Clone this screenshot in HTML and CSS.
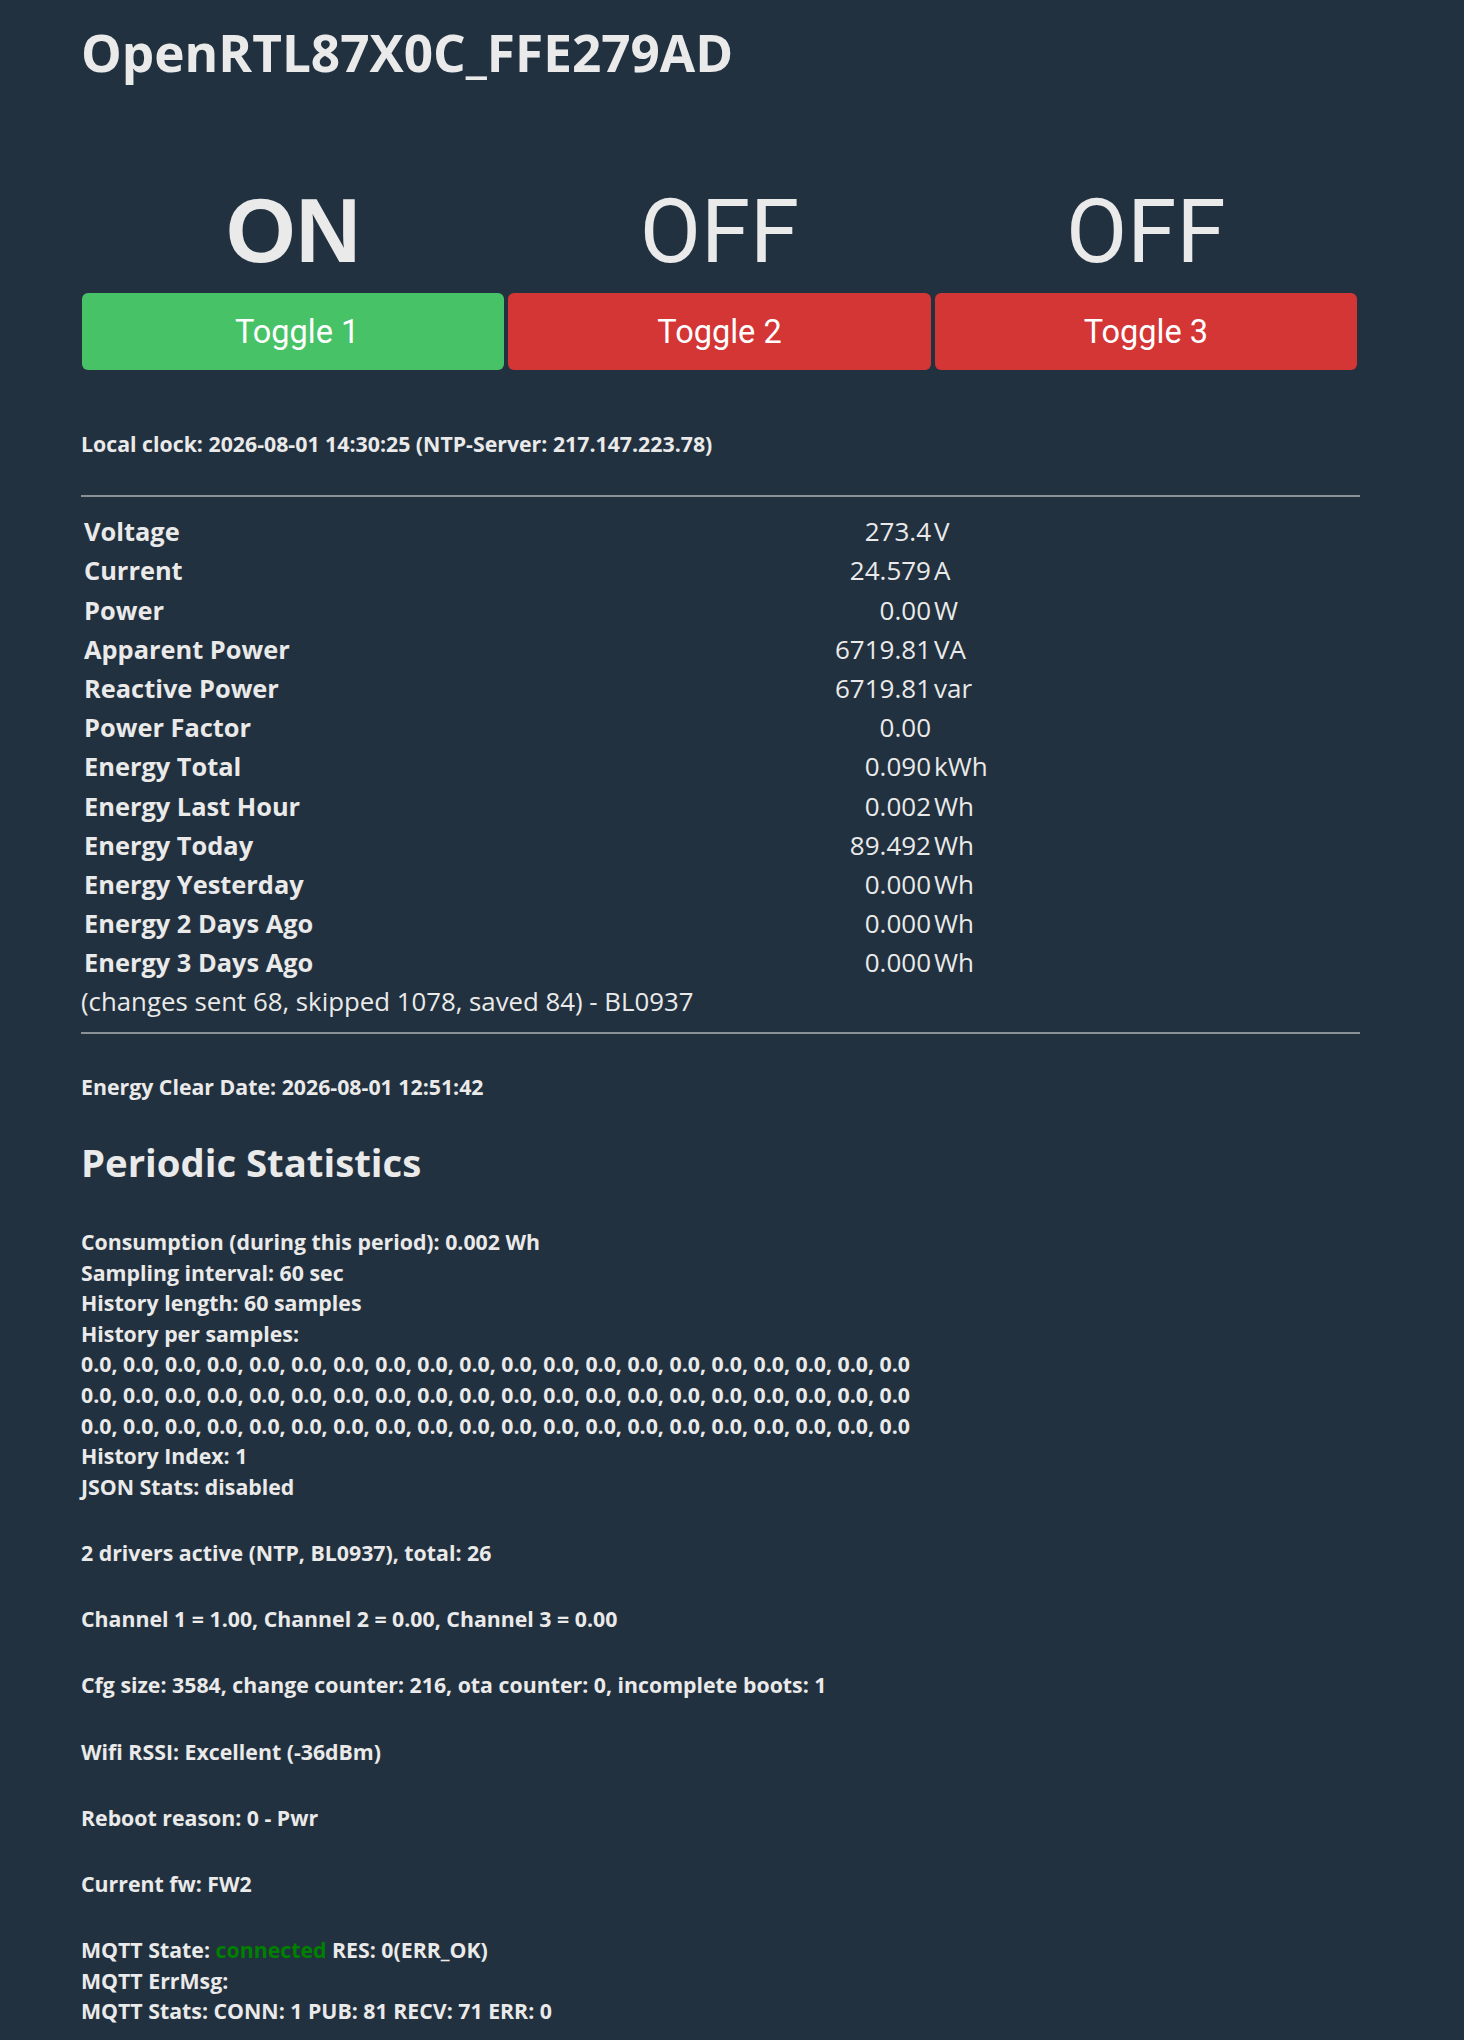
FILE: index.html
```html
<!DOCTYPE html>
<html lang="en">
<head>
    <meta charset="UTF-8">
    <meta name="viewport" content="width=device-width, initial-scale=1.0">
    <link rel="stylesheet" href="styles.css">
    <title>OpenRTL87X0C_FFE279AD</title>
</head>
<body>
<div class="page">
    <h1 class="title">OpenRTL87X0C_FFE279AD</h1>

    <div class="relays">
        <div class="relay">
            <div class="state on">ON</div>
            <button class="toggle green">Toggle 1</button>
        </div>
        <div class="relay">
            <div class="state">OFF</div>
            <button class="toggle red">Toggle 2</button>
        </div>
        <div class="relay">
            <div class="state">OFF</div>
            <button class="toggle red">Toggle 3</button>
        </div>
    </div>

    <h5>Local clock: 2026-08-01 14:30:25 (NTP-Server: 217.147.223.78)</h5>
    <hr>

    <table class="readings">
        <colgroup>
            <col class="c-name">
            <col class="c-value">
            <col>
        </colgroup>
        <tr><td class="name">Voltage</td><td class="value">273.4</td><td class="unit">V</td></tr>
        <tr><td class="name">Current</td><td class="value">24.579</td><td class="unit">A</td></tr>
        <tr><td class="name">Power</td><td class="value">0.00</td><td class="unit">W</td></tr>
        <tr><td class="name">Apparent Power</td><td class="value">6719.81</td><td class="unit">VA</td></tr>
        <tr><td class="name">Reactive Power</td><td class="value">6719.81</td><td class="unit">var</td></tr>
        <tr><td class="name">Power Factor</td><td class="value">0.00</td><td class="unit"></td></tr>
        <tr><td class="name">Energy Total</td><td class="value">0.090</td><td class="unit">kWh</td></tr>
        <tr><td class="name">Energy Last Hour</td><td class="value">0.002</td><td class="unit">Wh</td></tr>
        <tr><td class="name">Energy Today</td><td class="value">89.492</td><td class="unit">Wh</td></tr>
        <tr><td class="name">Energy Yesterday</td><td class="value">0.000</td><td class="unit">Wh</td></tr>
        <tr><td class="name">Energy 2 Days Ago</td><td class="value">0.000</td><td class="unit">Wh</td></tr>
        <tr><td class="name">Energy 3 Days Ago</td><td class="value">0.000</td><td class="unit">Wh</td></tr>
    </table>
    <div class="note">(changes sent 68, skipped 1078, saved 84) - BL0937</div>
    <hr class="after-note">

    <h5>Energy Clear Date: 2026-08-01 12:51:42</h5>
    <h2>Periodic Statistics</h2>
    <h5>
        Consumption (during this period): 0.002 Wh<br>
        Sampling interval: 60 sec<br>
        History length: 60 samples<br>
        History per samples:<br>
        0.0, 0.0, 0.0, 0.0, 0.0, 0.0, 0.0, 0.0, 0.0, 0.0, 0.0, 0.0, 0.0, 0.0, 0.0, 0.0, 0.0, 0.0, 0.0, 0.0<br>
        0.0, 0.0, 0.0, 0.0, 0.0, 0.0, 0.0, 0.0, 0.0, 0.0, 0.0, 0.0, 0.0, 0.0, 0.0, 0.0, 0.0, 0.0, 0.0, 0.0<br>
        0.0, 0.0, 0.0, 0.0, 0.0, 0.0, 0.0, 0.0, 0.0, 0.0, 0.0, 0.0, 0.0, 0.0, 0.0, 0.0, 0.0, 0.0, 0.0, 0.0<br>
        History Index: 1<br>
        JSON Stats: disabled
    </h5>
    <h5>2 drivers active (NTP, BL0937), total: 26</h5>
    <h5>Channel 1 = 1.00, Channel 2 = 0.00, Channel 3 = 0.00</h5>
    <h5>Cfg size: 3584, change counter: 216, ota counter: 0, incomplete boots: 1</h5>
    <h5>Wifi RSSI: Excellent (-36dBm)</h5>
    <h5>Reboot reason: 0 - Pwr</h5>
    <h5>Current fw: FW2</h5>
    <h5>
        MQTT State: <span class="ok">connected</span> RES: 0(ERR_OK)<br>
        MQTT ErrMsg: <br>
        MQTT Stats: CONN: 1 PUB: 81 RECV: 71 ERR: 0
    </h5>
</div>
</body>
</html>
```

FILE: styles.css
```css
body
{
    margin: 0;
    background-color: #22313f;
    color: #eaeaea;
    font-family: "Open Sans", "Noto Sans", sans-serif;
}

.page
{
    width: 1279px;
    margin-left: 81px;
}

.title
{
    margin: 18px 0 0;
    font-size: 51.3px;
    line-height: 68px;
    font-weight: bold;
}

/* relay states with their buttons */
.relays
{
    display: grid;
    grid-template-columns: repeat(3, 1fr);
    column-gap: 4px;
    margin: 94px 3px 59px 1px;
}

.state
{
    font-family: Roboto, "Liberation Sans", sans-serif;
    font-size: 89px;
    line-height: 103px;
    text-align: center;
}

.state.on
{
    font-family: "Liberation Sans", Arial, sans-serif;
    font-size: 90px;
    font-weight: bold;
}

.toggle
{
    display: block;
    width: 100%;
    height: 77px;
    margin-top: 10px;
    border: 0;
    border-radius: 6px;
    color: #fff;
    font-family: Roboto, "Liberation Sans", sans-serif;
    font-size: 32.5px;
    cursor: pointer;
}

.green
{
    background-color: #47c266;
    padding-left: 14px;
}

.red
{
    background-color: #d43535;
}

h5
{
    margin: 35.6px 0;
    font-size: 21.3px;
    line-height: 30.6px;
    font-weight: bold;
}

h2
{
    margin: 37px 0 42.3px;
    font-size: 38.3px;
    line-height: 45px;
    font-weight: bold;
}

hr
{
    margin: 13px 0;
    border: 0;
    border-top: 2px solid #8b9197;
}

hr.after-note
{
    margin: 12.6px 0 38px;
}

/* power readings */
.readings
{
    width: 100%;
    margin-top: 15px;
    table-layout: fixed;
    border-collapse: collapse;
    font-size: 26px;
}

.c-name
{
    width: 603px;
}

.c-value
{
    width: 248px;
}

.readings td
{
    height: 39.2px;
    padding: 0;
    line-height: 39.2px;
    white-space: nowrap;
}

.readings .name
{
    padding-left: 3px;
    font-size: 25.4px;
    font-weight: bold;
}

.readings .value
{
    padding-right: 1px;
    text-align: right;
}

.readings .unit
{
    padding-left: 2px;
}

.note
{
    font-size: 25.8px;
    line-height: 37px;
}

.ok
{
    color: green;
}
```
